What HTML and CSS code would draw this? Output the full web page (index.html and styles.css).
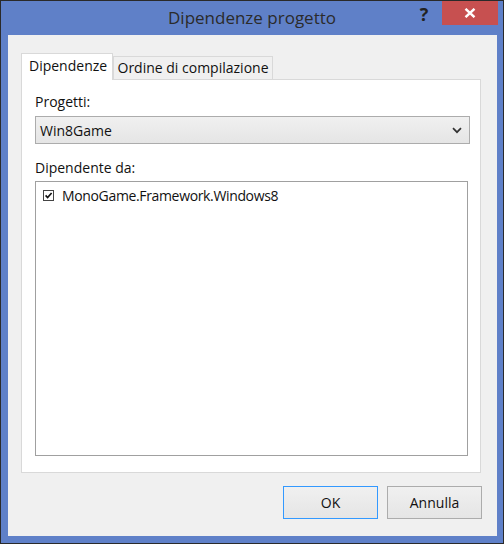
FILE: index.html
```html
<!DOCTYPE html>
<html lang="it">
<head>
<meta charset="utf-8">
<title>Dipendenze progetto</title>
<link rel="stylesheet" href="styles.css">
</head>
<body>
<div class="window">
  <div class="titlebar">
    <div class="tb-side"></div>
    <div class="title">Dipendenze progetto</div>
    <div class="tb-side tb-controls">
      <span class="help">?</span>
      <span class="close">
        <svg width="12" height="10" viewBox="0 0 12 10"><path d="M1.5 0.8 L10.5 9.2 M10.5 0.8 L1.5 9.2" stroke="#fff" stroke-width="2.4" fill="none"/></svg>
      </span>
    </div>
  </div>
  <div class="client">
    <div class="tabs">
      <div class="tab tab-active">Dipendenze</div>
      <div class="tab">Ordine di compilazione</div>
    </div>
    <div class="panel">
      <div class="label">Progetti:</div>
      <div class="combo">
        <span>Win8Game</span>
        <svg class="chev" width="10" height="7" viewBox="0 0 10 7"><path d="M1 1.2 L5 5.2 L9 1.2" stroke="#333" stroke-width="1.7" fill="none"/></svg>
      </div>
      <div class="label label2">Dipendente da:</div>
      <div class="list">
        <div class="item">
          <svg class="check" width="11" height="11" viewBox="0 0 11 11"><rect x="0.5" y="0.5" width="10" height="10" fill="#fff" stroke="#444"/><path d="M2.6 5.4 L4.6 7.6 L8.6 3" stroke="#111" stroke-width="1.6" fill="none"/></svg>
          <span class="item-text">MonoGame.Framework.Windows8</span>
        </div>
      </div>
    </div>
    <div class="buttons">
      <div class="btn btn-default">OK</div>
      <div class="btn">Annulla</div>
    </div>
  </div>
</div>
</body>
</html>
```
FILE: styles.css
```css
html, body {
  margin: 0;
  padding: 0;
}
body {
  width: 504px;
  height: 544px;
  font-family: "Open Sans", "Noto Sans", sans-serif;
  font-size: 14px;
  color: #111;
}
.window {
  box-sizing: border-box;
  width: 504px;
  height: 544px;
  border: 1px solid #2a2a2a;
  background: #5f80c8;
  display: flex;
  flex-direction: column;
}
.titlebar {
  height: 34px;
  display: grid;
  grid-template-columns: 1fr auto 1fr;
  align-items: start;
}
.title {
  font-size: 17px;
  color: #2b2b2b;
  line-height: 33px;
}
.tb-controls {
  display: flex;
  justify-content: flex-end;
  align-items: flex-start;
  margin-right: 5px;
}
.help {
  width: 28px;
  text-align: center;
  font-weight: bold;
  font-size: 18px;
  line-height: 26px;
  color: #222;
  margin-right: 4px;
}
.close {
  width: 56px;
  height: 24px;
  background: #c75050;
  display: flex;
  align-items: center;
  justify-content: center;
}
.client {
  flex: 1;
  margin: 0 6px 7px 7px;
  background: #f0f0f0;
  padding: 18px 15px 17px 13px;
  display: flex;
  flex-direction: column;
}
.tabs {
  display: flex;
  align-items: flex-end;
  height: 26px;
}
.tab {
  box-sizing: border-box;
  height: 23px;
  border: 1px solid #d9d9d9;
  border-bottom: none;
  background: #f0f0f0;
  padding: 0 3px;
  line-height: 22px;
  width: 160px;
  text-align: center;
}
.tab-active {
  position: relative;
  z-index: 1;
  height: 27px;
  width: 92px;
  margin-bottom: -1px;
  background: #fff;
  line-height: 24px;
  padding-left: 7px;
  text-align: left;
}
.panel {
  box-sizing: border-box;
  height: 394px;
  width: 460px;
  border: 1px solid #d9d9d9;
  background: #fff;
  padding: 12px 10px 16px 13px;
  display: flex;
  flex-direction: column;
}
.label {
  line-height: 20px;
  height: 20px;
  margin-bottom: 4px;
}
.label2 {
  margin-top: 14px;
  margin-bottom: 3px;
}
.combo {
  box-sizing: border-box;
  height: 28px;
  width: 435px;
  border: 1px solid #acacac;
  background: linear-gradient(#f0f0f0, #e5e5e5);
  display: flex;
  align-items: center;
  justify-content: space-between;
  padding: 0 7px 0 4px;
}
.chev {
  margin-top: 1px;
}
.list {
  box-sizing: border-box;
  width: 433px;
  flex: 1;
  border: 1px solid #a0a0a0;
  background: #fff;
  padding: 3px 0 0 7px;
}
.item {
  display: flex;
  align-items: center;
  gap: 8px;
  height: 20px;
}
.item-text {
  letter-spacing: -0.35px;
}
.check {
  flex: none;
}
.buttons {
  margin-top: 13px;
  display: flex;
  justify-content: flex-end;
  gap: 9px;
}
.btn {
  box-sizing: border-box;
  width: 95px;
  height: 33px;
  border: 1px solid #acacac;
  background: linear-gradient(#f0f0f0, #e5e5e5);
  display: flex;
  align-items: center;
  justify-content: center;
}
.btn-default {
  border-color: #3399ff;
}
```
